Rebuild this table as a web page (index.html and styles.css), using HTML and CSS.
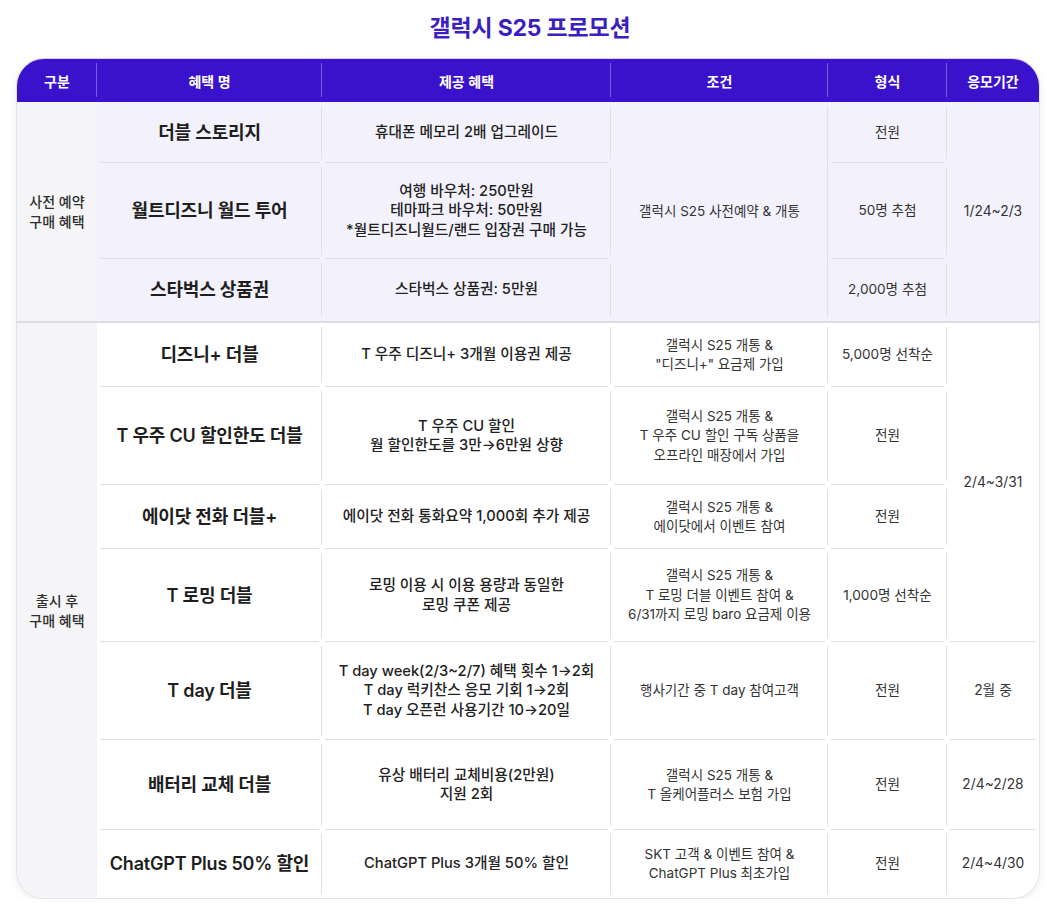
FILE: index.html
```html
<!DOCTYPE html>
<html lang="ko">
<head>
<meta charset="utf-8">
<title>갤럭시 S25 프로모션</title>
<link rel="stylesheet" href="styles.css">
</head>
<body>
<h1 class="title">갤럭시 S25 프로모션</h1>
<div class="card">
  <table class="promo">
    <colgroup>
      <col class="c-cat"><col class="c-name"><col class="c-offer"><col class="c-cond"><col class="c-type"><col class="c-period">
    </colgroup>
    <thead>
      <tr>
        <th>구분</th><th>혜택 명</th><th>제공 혜택</th><th>조건</th><th>형식</th><th class="last">응모기간</th>
      </tr>
    </thead>
    <tbody class="pre">
      <tr class="h61">
        <td rowspan="3" class="cat end">사전 예약<br>구매 혜택</td>
        <td class="name bb">더블 스토리지</td>
        <td class="offer bb">휴대폰 메모리 2배 업그레이드</td>
        <td rowspan="3" class="cond end">갤럭시 S25 사전예약 &amp; 개통</td>
        <td class="type bb">전원</td>
        <td rowspan="3" class="period end last">1/24~2/3</td>
      </tr>
      <tr class="h96">
        <td class="name bb">월트디즈니 월드 투어</td>
        <td class="offer bb">여행 바우처: 250만원<br>테마파크 바우처: 50만원<br>*월트디즈니월드/랜드 입장권 구매 가능</td>
        <td class="type bb">50명 추첨</td>
      </tr>
      <tr class="h64">
        <td class="name end">스타벅스 상품권</td>
        <td class="offer end">스타벅스 상품권: 5만원</td>
        <td class="type end">2,000명 추첨</td>
      </tr>
    </tbody>
    <tbody class="post">
      <tr class="h64">
        <td rowspan="7" class="cat">출시 후<br>구매 혜택</td>
        <td class="name bb">디즈니+ 더블</td>
        <td class="offer bb">T 우주 디즈니+ 3개월 이용권 제공</td>
        <td class="cond bb">갤럭시 S25 개통 &amp;<br>"디즈니+" 요금제 가입</td>
        <td class="type bb">5,000명 선착순</td>
        <td rowspan="4" class="period bb last">2/4~3/31</td>
      </tr>
      <tr class="h98">
        <td class="name bb">T 우주 CU 할인한도 더블</td>
        <td class="offer bb">T 우주 CU 할인<br>월 할인한도를 3만→6만원 상향</td>
        <td class="cond bb">갤럭시 S25 개통 &amp;<br>T 우주 CU 할인 구독 상품을<br>오프라인 매장에서 가입</td>
        <td class="type bb">전원</td>
      </tr>
      <tr class="h64">
        <td class="name bb">에이닷 전화 더블+</td>
        <td class="offer bb">에이닷 전화 통화요약 1,000회 추가 제공</td>
        <td class="cond bb">갤럭시 S25 개통 &amp;<br>에이닷에서 이벤트 참여</td>
        <td class="type bb">전원</td>
      </tr>
      <tr class="h93">
        <td class="name bb">T 로밍 더블</td>
        <td class="offer bb">로밍 이용 시 이용 용량과 동일한<br>로밍 쿠폰 제공</td>
        <td class="cond bb">갤럭시 S25 개통 &amp;<br>T 로밍 더블 이벤트 참여 &amp;<br>6/31까지 로밍 baro 요금제 이용</td>
        <td class="type bb">1,000명 선착순</td>
      </tr>
      <tr class="h98">
        <td class="name bb">T day 더블</td>
        <td class="offer bb">T day week(2/3~2/7) 혜택 횟수 1→2회<br>T day 럭키찬스 응모 기회 1→2회<br>T day 오픈런 사용기간 10→20일</td>
        <td class="cond bb">행사기간 중 T day 참여고객</td>
        <td class="type bb">전원</td>
        <td class="period bb last">2월 중</td>
      </tr>
      <tr class="h90">
        <td class="name bb">배터리 교체 더블</td>
        <td class="offer bb">유상 배터리 교체비용(2만원)<br>지원 2회</td>
        <td class="cond bb">갤럭시 S25 개통 &amp;<br>T 올케어플러스 보험 가입</td>
        <td class="type bb">전원</td>
        <td class="period bb last">2/4~2/28</td>
      </tr>
      <tr class="h68">
        <td class="name">ChatGPT Plus 50% 할인</td>
        <td class="offer">ChatGPT Plus 3개월 50% 할인</td>
        <td class="cond">SKT 고객 &amp; 이벤트 참여 &amp;<br>ChatGPT Plus 최초가입</td>
        <td class="type">전원</td>
        <td class="period last">2/4~4/30</td>
      </tr>
    </tbody>
  </table>
</div>
</body>
</html>
```

FILE: styles.css
```css
html, body {
  margin: 0;
  padding: 0;
  background: #ffffff;
}
body {
  font-family: Inter, "Noto Sans CJK KR", "Noto Sans", sans-serif;
  color: #222;
}
.title {
  margin: 13px 0 15px;
  text-align: center;
  font-size: 23px;
  line-height: 30px;
  font-weight: 700;
  color: #3b1fbf;
  letter-spacing: -0.2px;
}
.card {
  margin-left: 16px;
  width: 1022px;
  border: 1px solid #e4e2ee;
  border-top-color: #d6d0f5;
  border-radius: 28px;
  overflow: hidden;
  box-shadow: 0 3px 10px rgba(0, 0, 0, 0.07);
  background: #fff;
}
.promo {
  width: 100%;
  table-layout: fixed;
  border-collapse: separate;
  border-spacing: 0;
}
.c-cat { width: 80px; }
.c-name { width: 225px; }
.c-offer { width: 289px; }
.c-cond { width: 217px; }
.c-type { width: 119px; }
.c-period { width: 92px; }

.promo th {
  position: relative;
  height: 43px;
  padding: 0;
  background: #3a12cc;
  color: #fff;
  font-size: 14px;
  font-weight: 600;
  text-align: center;
  vertical-align: middle;
}
.promo th::after {
  content: "";
  position: absolute;
  right: 0;
  top: 4px;
  bottom: 5px;
  width: 1px;
  background: rgba(255, 255, 255, 0.32);
}
.promo th.last::after { display: none; }

.promo td {
  position: relative;
  padding: 0 4px;
  text-align: center;
  vertical-align: middle;
  font-size: 14px;
  line-height: 19.5px;
  color: #2a2a2a;
}
.promo td::after {
  content: "";
  position: absolute;
  right: 0;
  top: 4px;
  bottom: 4px;
  width: 1px;
  background: #e0e0e7;
}
.promo td.cat::after,
.promo td.last::after { display: none; }

.promo td.bb::before {
  content: "";
  position: absolute;
  left: 3px;
  right: 3px;
  bottom: 0;
  height: 1px;
  background: #dfdfe6;
}
.promo td.end {
  border-bottom: 2px solid #dcdce3;
}

.pre td { background: #f3f2fc; }
.post td { background: #ffffff; }
.promo td.cat {
  background: #f5f5f7;
  font-size: 14px;
  font-weight: 500;
  color: #2e2e2e;
  line-height: 20px;
}
.promo td.name {
  font-size: 18px;
  font-weight: 600;
  color: #1e1e1e;
  letter-spacing: -0.2px;
}
.promo td.offer {
  font-size: 14.7px;
  font-weight: 500;
  color: #222;
}
.promo td.cond {
  font-size: 13.5px;
  font-weight: 400;
  color: #333;
}
.promo td.type {
  font-size: 13.6px;
  font-weight: 400;
  color: #333;
}
.promo td.period {
  font-size: 13.8px;
  font-weight: 400;
  color: #333;
}

.h61 { height: 61px; }
.h64 { height: 64px; }
.h68 { height: 68px; }
.h90 { height: 90px; }
.h93 { height: 93px; }
.h96 { height: 96px; }
.h98 { height: 98px; }
```
